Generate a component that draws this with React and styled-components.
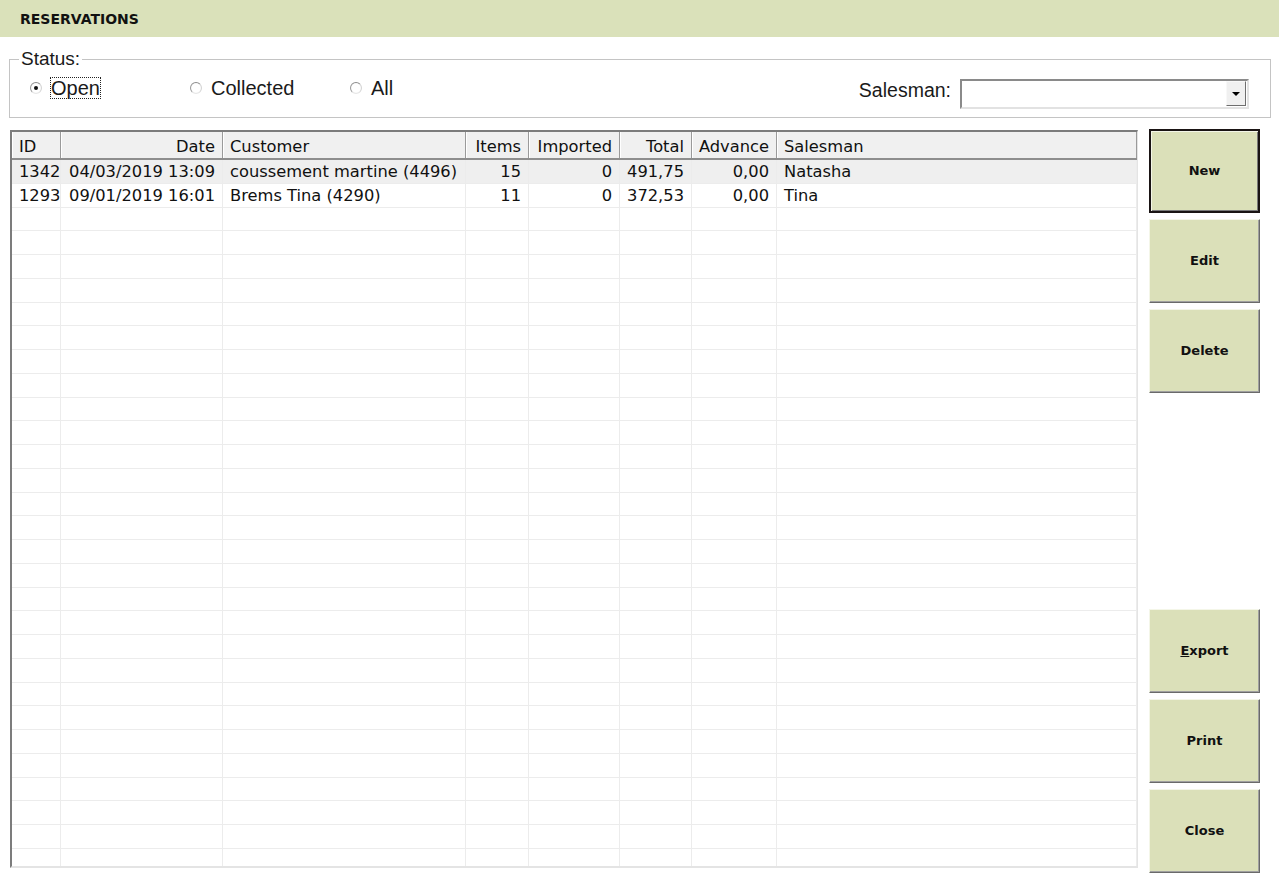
import React from 'react';
import styled, { createGlobalStyle, css } from 'styled-components';

const GlobalStyle = createGlobalStyle`
  html, body { margin: 0; padding: 0; background: #ffffff; }
  body { font-family: "Liberation Sans", Arial, sans-serif; color: #000; }
  * { box-sizing: border-box; }
`;

const Page = styled.div`
  width: 1279px;
  height: 888px;
  display: flex;
  flex-direction: column;
  overflow: hidden;
  background: #fff;
`;

const TitleBar = styled.header`
  height: 37px;
  flex: none;
  display: flex;
  align-items: center;
  padding-left: 20px;
  background: #dae1ba;
  font-family: "DejaVu Sans", Verdana, sans-serif;
  font-weight: bold;
  font-size: 14px;
  color: #111;
`;

const StatusGroup = styled.fieldset`
  margin: 12px 8px 0 9px;
  padding: 0 21px 8px 20px;
  border: 1px solid #c4c4c4;
  display: flex;
  align-items: flex-start;
  justify-content: space-between;
  min-width: 0;
`;

const Legend = styled.legend`
  margin-left: -11px;
  padding: 0 2px;
  font-size: 19px;
  line-height: 20px;
  color: #1a1a1a;
`;

const RadioRow = styled.div`
  display: flex;
  margin-top: 9px;
`;

const RadioItem = styled.label`
  width: 160px;
  display: flex;
  align-items: center;
  gap: 9px;
  font-size: 20px;
  line-height: 20px;
  color: #1a1a1a;
`;

const RadioDot = styled.span`
  width: 12px;
  height: 12px;
  border-radius: 50%;
  border: 1px solid;
  border-color: #8c8c8c #d4d4d4 #e6e6e6 #9a9a9a;
  background: radial-gradient(circle, #fff 55%, #ececec 100%);
  display: flex;
  align-items: center;
  justify-content: center;
  flex: none;
  &::after {
    content: '';
    width: 4px;
    height: 4px;
    border-radius: 50%;
    background: ${(p) => (p.$checked ? '#111' : 'transparent')};
  }
`;

const RadioText = styled.span`
  ${(p) =>
    p.$focused &&
    css`
      outline: 1px dotted #222;
      outline-offset: 0;
    `}
`;

const SalesmanField = styled.div`
  display: flex;
  align-items: flex-start;
  gap: 9px;
  margin-top: 10px;
`;

const FieldLabel = styled.span`
  font-size: 19.5px;
  line-height: 22px;
  color: #1a1a1a;
`;

const Combo = styled.div`
  width: 289px;
  height: 30px;
  border: 2px solid;
  border-color: #8a8a8a #e2e2e2 #e2e2e2 #8a8a8a;
  background: #fff;
  display: flex;
  justify-content: flex-end;
  align-items: stretch;
  padding: 0 1px 1px 0;
`;

const ComboButton = styled.div`
  width: 20px;
  background: #f0f0f0;
  border: 1px solid;
  border-color: #f8f8f8 #6e6e6e #6e6e6e #f8f8f8;
  display: flex;
  align-items: center;
  justify-content: center;
  &::after {
    content: '';
    border-left: 4px solid transparent;
    border-right: 4px solid transparent;
    border-top: 4px solid #000;
    margin-top: 1px;
  }
`;

const Main = styled.div`
  flex: none;
  display: flex;
  align-items: flex-start;
  margin-top: 11px;
  padding-left: 10px;
`;

const Grid = styled.div`
  width: 1128px;
  height: 738px;
  margin-top: 1px;
  border-style: solid;
  border-width: 2px 1px 2px 2px;
  border-color: #7c7c7c #e4e4e4 #e4e4e4 #7c7c7c;
  display: flex;
  flex-direction: column;
  overflow: hidden;
  font-family: "DejaVu Sans", Verdana, sans-serif;
  font-size: 16.3px;
  color: #111;
`;

const columnTemplate = '49px 162px 243px 63px 91px 72px 85px 1fr';

const HeaderRow = styled.div`
  display: grid;
  grid-template-columns: ${columnTemplate};
  height: 28px;
  flex: none;
  background: #f0f0f0;
  border-bottom: 2px solid #8e8e8e;
`;

const HeaderCell = styled.div`
  display: flex;
  align-items: center;
  justify-content: ${(p) => (p.$align === 'right' ? 'flex-end' : 'flex-start')};
  padding: 2px 7px 0;
  border-right: 1px solid #9a9a9a;
  box-shadow: inset 1px 0 0 #ffffff;
  white-space: nowrap;
  overflow: hidden;
`;

const Body = styled.div`
  flex: 1;
  overflow: hidden;
`;

const Row = styled.div`
  display: grid;
  grid-template-columns: ${columnTemplate};
  height: 23.75px;
  background: ${(p) => (p.$selected ? '#efefef' : '#ffffff')};
`;

const Cell = styled.div`
  display: flex;
  align-items: center;
  justify-content: ${(p) => (p.$align === 'right' ? 'flex-end' : 'flex-start')};
  padding: 0 7px;
  border-right: 1px solid #ececec;
  border-bottom: 1px solid #ececec;
  white-space: nowrap;
  overflow: hidden;
`;

const ButtonColumn = styled.div`
  width: 111px;
  height: 744px;
  margin-left: 11px;
  display: flex;
  flex-direction: column;
  justify-content: space-between;
`;

const ButtonGroup = styled.div`
  display: flex;
  flex-direction: column;
  gap: 6px;
`;

const ActionButton = styled.button`
  height: 84px;
  width: 111px;
  background: #dbe0b9;
  border: 1px solid;
  border-color: #f4f6e8 #6a6a6a #6a6a6a #f4f6e8;
  box-shadow: inset -1px -1px 0 #a0a0a0;
  font-family: "DejaVu Sans", Verdana, sans-serif;
  font-weight: bold;
  font-size: 13px;
  color: #111;
  padding: 0 0 2px;
  cursor: pointer;
  ${(p) =>
    p.$default &&
    css`
      border: 2px solid #1a1414;
      box-shadow: inset 1px 1px 0 #f4f6e8, inset -1px -1px 0 #7a7a7a;
    `}
  u { text-decoration: underline; }
`;

const columns = [
  { key: 'id', label: 'ID', align: 'left' },
  { key: 'date', label: 'Date', align: 'right' },
  { key: 'customer', label: 'Customer', align: 'left' },
  { key: 'items', label: 'Items', align: 'right' },
  { key: 'imported', label: 'Imported', align: 'right' },
  { key: 'total', label: 'Total', align: 'right' },
  { key: 'advance', label: 'Advance', align: 'right' },
  { key: 'salesman', label: 'Salesman', align: 'left' },
];

const reservations = [
  {
    id: '1342',
    date: '04/03/2019 13:09',
    customer: 'coussement martine (4496)',
    items: '15',
    imported: '0',
    total: '491,75',
    advance: '0,00',
    salesman: 'Natasha',
  },
  {
    id: '1293',
    date: '09/01/2019 16:01',
    customer: 'Brems Tina (4290)',
    items: '11',
    imported: '0',
    total: '372,53',
    advance: '0,00',
    salesman: 'Tina',
  },
];

const TOTAL_ROWS = 31;

export default function App() {
  const rows = Array.from({ length: TOTAL_ROWS }, (_, i) => reservations[i] || null);

  return (
    <Page>
      <GlobalStyle />
      <TitleBar>RESERVATIONS</TitleBar>

      <StatusGroup>
        <Legend>Status:</Legend>
        <RadioRow>
          <RadioItem>
            <RadioDot $checked />
            <RadioText $focused>Open</RadioText>
          </RadioItem>
          <RadioItem>
            <RadioDot />
            <RadioText>Collected</RadioText>
          </RadioItem>
          <RadioItem>
            <RadioDot />
            <RadioText>All</RadioText>
          </RadioItem>
        </RadioRow>
        <SalesmanField>
          <FieldLabel>Salesman:</FieldLabel>
          <Combo>
            <ComboButton />
          </Combo>
        </SalesmanField>
      </StatusGroup>

      <Main>
        <Grid>
          <HeaderRow>
            {columns.map((c) => (
              <HeaderCell key={c.key} $align={c.align}>
                {c.label}
              </HeaderCell>
            ))}
          </HeaderRow>
          <Body>
            {rows.map((r, i) => (
              <Row key={i} $selected={i === 0}>
                {columns.map((c) => (
                  <Cell key={c.key} $align={c.align}>
                    {r ? r[c.key] : ''}
                  </Cell>
                ))}
              </Row>
            ))}
          </Body>
        </Grid>

        <ButtonColumn>
          <ButtonGroup>
            <ActionButton $default>New</ActionButton>
            <ActionButton>Edit</ActionButton>
            <ActionButton>Delete</ActionButton>
          </ButtonGroup>
          <ButtonGroup>
            <ActionButton>
              <u>E</u>xport
            </ActionButton>
            <ActionButton>Print</ActionButton>
            <ActionButton>Close</ActionButton>
          </ButtonGroup>
        </ButtonColumn>
      </Main>
    </Page>
  );
}
